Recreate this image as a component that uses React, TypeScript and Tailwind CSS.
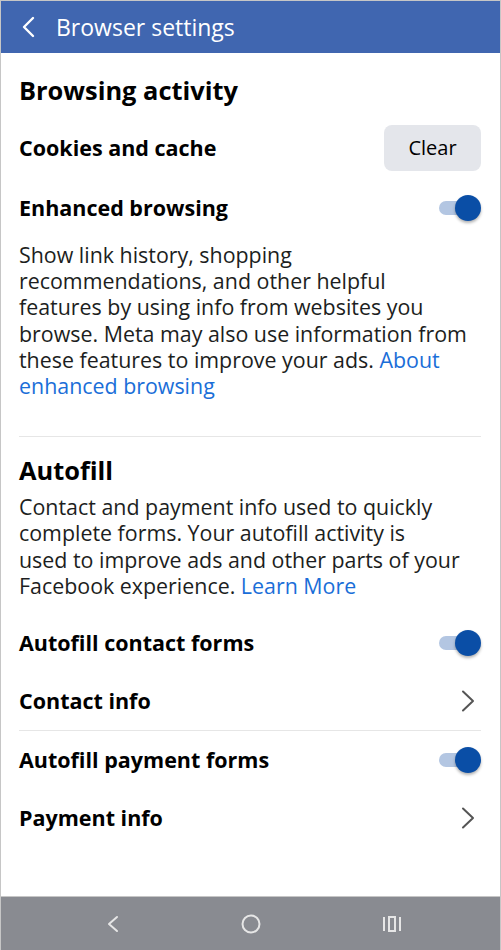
function Toggle() {
  return (
    <div className="relative h-[26px] w-[44px] shrink-0">
      <div className="absolute left-[2px] top-[6px] h-[14px] w-[40px] rounded-full bg-[#b3c6e2]" />
      <div className="absolute right-0 top-0 h-[26px] w-[26px] rounded-full bg-[#0a4ea6] shadow-[0_2px_3px_rgba(0,0,0,0.3)]" />
    </div>
  )
}

function Chevron() {
  return (
    <svg width="14" height="22" viewBox="0 0 14 22" fill="none" stroke="#555" strokeWidth="2" strokeLinecap="round" strokeLinejoin="round" className="mr-[6px]">
      <polyline points="2,1.5 12,11 2,20.5" />
    </svg>
  )
}

function Row({ label, right, height = 'h-[58px]' }: { label: string; right: React.ReactNode; height?: string }) {
  return (
    <div className={`flex items-center justify-between ${height}`}>
      <span className="text-[21.5px] font-bold text-black">{label}</span>
      {right}
    </div>
  )
}

export default function App() {
  return (
    <div className="flex h-[950px] w-[501px] flex-col overflow-hidden border-x border-t border-[#c6c6c6] bg-white font-['Open_Sans',sans-serif]">
      <header className="flex h-[52px] shrink-0 items-center bg-[#4066b0] text-white">
        <svg width="14" height="22" viewBox="0 0 14 22" fill="none" stroke="white" strokeWidth="2.4" strokeLinecap="round" strokeLinejoin="round" className="ml-[20px]">
          <polyline points="12,2 3,11 12,20" />
        </svg>
        <span className="ml-[21px] text-[23px] leading-none">Browser settings</span>
      </header>

      <main className="flex-1 pl-[18px] pr-[19px]">
        <h2 className="mt-[19px] text-[25.4px] font-bold leading-[36px] text-black">Browsing activity</h2>
        <div className="mt-[10px] flex h-[60px] items-center justify-between">
          <span className="text-[21.5px] font-bold text-black">Cookies and cache</span>
          <button className="h-[46px] w-[97px] rounded-[8px] bg-[#e4e6eb] text-[20px] text-black">Clear</button>
        </div>
        <Row label="Enhanced browsing" right={<Toggle />} height="h-[60px]" />
        <p className="mt-[4px] text-[21.4px] leading-[26.2px] text-[#1c1e21]">
          Show link history, shopping<br />
          recommendations, and other helpful<br />
          features by using info from websites you<br />
          browse. Meta may also use information from<br />
          these features to improve your ads.{' '}
          <span className="text-[#1a6ed8]">About<br />enhanced browsing</span>
        </p>
        <div className="mt-[37px] h-px bg-[#e6e6e6]" />
        <h2 className="mt-[15px] text-[25.4px] font-bold leading-[36px] text-black">Autofill</h2>
        <p className="mt-[6px] text-[21.4px] leading-[26.2px] text-[#1c1e21]">
          Contact and payment info used to quickly<br />
          complete forms. Your autofill activity is<br />
          used to improve ads and other parts of your<br />
          Facebook experience. <span className="text-[#1a6ed8]">Learn More</span>
        </p>
        <div className="mt-[15px]">
          <Row label="Autofill contact forms" right={<Toggle />} />
          <Row label="Contact info" right={<Chevron />} />
          <div className="h-px bg-[#e6e6e6]" />
          <Row label="Autofill payment forms" right={<Toggle />} />
          <Row label="Payment info" right={<Chevron />} />
        </div>
      </main>

      <nav className="flex h-[54px] shrink-0 items-center justify-center gap-[121px] border-t border-[#c6c6c6] bg-[#898b91] pl-[6px] text-[#e6e6e6]">
        <svg width="14" height="18" viewBox="0 0 14 18" fill="none" stroke="currentColor" strokeWidth="2" strokeLinecap="round" strokeLinejoin="round">
          <polyline points="11,2 3,9 11,16" />
        </svg>
        <svg width="20" height="20" viewBox="0 0 20 20"><circle cx="10" cy="10" r="8.5" fill="none" stroke="currentColor" strokeWidth="2" /></svg>
        <svg width="20" height="18" viewBox="0 0 20 18" fill="none" stroke="currentColor" strokeWidth="2">
          <line x1="2" y1="2" x2="2" y2="16" />
          <rect x="7" y="2" width="6" height="14" />
          <line x1="18" y1="2" x2="18" y2="16" />
        </svg>
      </nav>
    </div>
  )
}
